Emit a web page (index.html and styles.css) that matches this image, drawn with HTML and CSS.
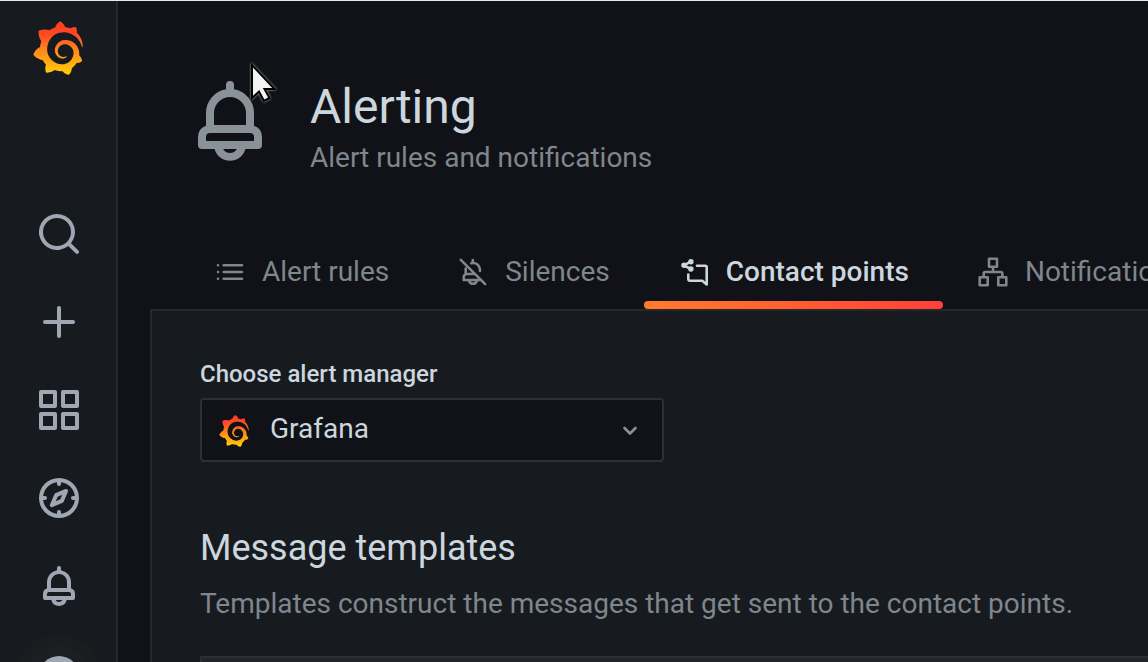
FILE: index.html
```html
<!DOCTYPE html>
<html lang="en">
<head>
    <meta charset="UTF-8">
    <meta name="viewport" content="width=device-width, initial-scale=1.0">
    <title>Alerting - Grafana</title>
    <link rel="stylesheet" href="styles.css">
</head>
<body>
    <svg class="defs" aria-hidden="true">
        <defs>
            <linearGradient id="logoGradient" x1="0" y1="1" x2="0" y2="0">
                <stop offset="0" stop-color="#ffd00c"/>
                <stop offset="0.15" stop-color="#ffb80e"/>
                <stop offset="0.45" stop-color="#ff8a1a"/>
                <stop offset="0.75" stop-color="#ff4a23"/>
                <stop offset="1" stop-color="#ff3a26"/>
            </linearGradient>
        </defs>
        <symbol id="logo" viewBox="0 0 351 365">
            <path fill="url(#logoGradient)" d="M342,161.2c-0.6-6.1-1.6-13.1-3.6-20.9c-2-7.7-5-16.2-9.4-25c-4.4-8.8-10.1-17.9-17.5-26.8c-2.9-3.5-6.1-6.9-9.5-10.2c5.1-20.3-6.2-37.9-6.2-37.9c-19.5-1.2-31.9,6.1-36.5,9.4c-0.8-0.3-1.5-0.7-2.3-1c-3.3-1.3-6.7-2.6-10.3-3.7c-3.5-1.1-7.1-2.1-10.8-3c-3.7-0.9-7.4-1.6-11.2-2.2c-0.7-0.1-1.3-0.2-2-0.3c-8.5-27.2-32.9-38.6-32.9-38.6c-27.3,17.3-32.4,41.5-32.4,41.5s-0.1,0.5-0.3,1.4c-1.5,0.4-3,0.9-4.5,1.3c-2.1,0.6-4.2,1.4-6.2,2.2c-2.1,0.8-4.1,1.6-6.2,2.5c-4.1,1.8-8.2,3.8-12.2,6c-3.9,2.2-7.7,4.6-11.4,7.1c-0.5-0.2-1-0.4-1-0.4c-37.8-14.4-71.3,2.9-71.3,2.9c-3.1,40.2,15.1,65.5,18.7,70.1c-0.9,2.5-1.7,5-2.5,7.5c-2.8,9.1-4.9,18.4-6.2,28.1c-0.2,1.4-0.4,2.8-0.5,4.2C18.8,192.7,8.5,228,8.5,228c29.1,33.5,63.1,35.6,63.1,35.6c0,0,0.1-0.1,0.1-0.1c4.3,7.7,9.3,15,14.9,21.9c2.4,2.9,4.8,5.6,7.4,8.3c-10.6,30.4,1.5,55.6,1.5,55.6c32.4,1.2,53.7-14.2,58.2-17.7c3.2,1.1,6.5,2.1,9.8,2.9c10,2.6,20.2,4.1,30.4,4.5c2.5,0.1,5.1,0.2,7.6,0.1l1.2,0l0.8,0l1.6,0l1.6-0.1l0,0.1c15.3,21.8,42.1,24.9,42.1,24.9c19.1-20.1,20.2-40.1,20.2-44.4l0,0c0,0,0-0.1,0-0.3c0-0.4,0-0.6,0-0.6l0,0c0-0.3,0-0.6,0-0.9c4-2.8,7.8-5.8,11.4-9.1c7.6-6.9,14.3-14.8,19.9-23.3c0.5-0.8,1-1.6,1.5-2.4c21.6,1.2,36.9-13.4,36.9-13.4c-3.6-22.5-16.4-33.5-19.1-35.6l0,0c0,0-0.1-0.1-0.3-0.2c-0.2-0.1-0.2-0.2-0.2-0.2c0,0,0,0,0,0c-0.1-0.1-0.3-0.2-0.5-0.3c0.1-1.4,0.2-2.7,0.3-4.1c0.2-2.4,0.2-4.9,0.2-7.3l0-1.8l0-0.9l0-0.5c0-0.6,0-0.4,0-0.6l-0.1-1.5l-0.1-2c0-0.7-0.1-1.3-0.2-1.9c-0.1-0.6-0.1-1.3-0.2-1.9l-0.2-1.9l-0.3-1.9c-0.4-2.5-0.8-4.9-1.4-7.4c-2.3-9.7-6.1-18.9-11-27.2c-5-8.3-11.2-15.6-18.3-21.8c-7-6.2-14.9-11.2-23.1-14.9c-8.3-3.7-16.9-6.1-25.5-7.2c-4.3-0.6-8.6-0.8-12.9-0.7l-1.6,0l-0.4,0c-0.1,0-0.6,0-0.5,0l-0.7,0l-1.6,0.1c-0.6,0-1.2,0.1-1.7,0.1c-2.2,0.2-4.4,0.5-6.5,0.9c-8.6,1.6-16.7,4.7-23.8,9c-7.1,4.3-13.3,9.6-18.3,15.6c-5,6-8.9,12.7-11.6,19.6c-2.7,6.9-4.2,14.1-4.6,21c-0.1,1.7-0.1,3.5-0.1,5.2c0,0.4,0,0.9,0,1.3l0.1,1.4c0.1,0.8,0.1,1.7,0.2,2.5c0.3,3.5,1,6.9,1.9,10.1c1.9,6.5,4.9,12.4,8.6,17.4c3.7,5,8.2,9.1,12.9,12.4c4.7,3.2,9.8,5.5,14.8,7c5,1.5,10,2.1,14.7,2.1c0.6,0,1.2,0,1.7,0c0.3,0,0.6,0,0.9,0c0.3,0,0.6,0,0.9-0.1c0.5,0,1-0.1,1.5-0.1c0.1,0,0.3,0,0.4-0.1l0.5-0.1c0.3,0,0.6-0.1,0.9-0.1c0.6-0.1,1.1-0.2,1.7-0.3c0.6-0.1,1.1-0.2,1.6-0.4c1.1-0.2,2.1-0.6,3.1-0.9c2-0.7,4-1.5,5.7-2.4c1.8-0.9,3.4-2,5-3c0.4-0.3,0.9-0.6,1.3-1c1.6-1.3,1.9-3.7,0.6-5.3c-1.1-1.4-3.1-1.8-4.7-0.9c-0.4,0.2-0.8,0.4-1.2,0.6c-1.4,0.7-2.8,1.3-4.3,1.8c-1.5,0.5-3.1,0.9-4.7,1.2c-0.8,0.1-1.6,0.2-2.5,0.3c-0.4,0-0.8,0.1-1.3,0.1c-0.4,0-0.9,0-1.2,0c-0.4,0-0.8,0-1.2,0c-0.5,0-1,0-1.5-0.1c0,0-0.3,0-0.1,0l-0.2,0l-0.3,0c-0.2,0-0.5,0-0.7-0.1c-0.5-0.1-0.9-0.1-1.4-0.2c-3.7-0.5-7.4-1.6-10.9-3.2c-3.6-1.6-7-3.8-10.1-6.6c-3.1-2.8-5.8-6.1-7.9-9.9c-2.1-3.8-3.6-8-4.3-12.4c-0.3-2.2-0.5-4.5-0.4-6.7c0-0.6,0.1-1.2,0.1-1.8c0,0.2,0-0.1,0-0.1l0-0.2l0-0.5c0-0.3,0.1-0.6,0.1-0.9c0.1-1.2,0.3-2.4,0.5-3.6c1.7-9.6,6.5-19,13.9-26.1c1.9-1.8,3.9-3.4,6-4.9c2.1-1.5,4.4-2.8,6.8-3.9c2.4-1.1,4.8-2,7.4-2.7c2.5-0.7,5.1-1.1,7.8-1.4c1.3-0.1,2.6-0.2,4-0.2c0.4,0,0.6,0,0.9,0l1.1,0l0.7,0c0.3,0,0,0,0.1,0l0.3,0l1.1,0.1c2.9,0.2,5.7,0.6,8.5,1.3c5.6,1.2,11.1,3.3,16.2,6.1c10.2,5.7,18.9,14.5,24.2,25.1c2.7,5.3,4.6,11,5.5,16.9c0.2,1.5,0.4,3,0.5,4.5l0.1,1.1l0.1,1.1c0,0.4,0,0.8,0,1.1c0,0.4,0,0.8,0,1.1l0,1l0,1.1c0,0.7-0.1,1.9-0.1,2.6c-0.1,1.6-0.3,3.3-0.5,4.9c-0.2,1.6-0.5,3.2-0.8,4.8c-0.3,1.6-0.7,3.2-1.1,4.7c-0.8,3.1-1.8,6.2-3,9.3c-2.4,6-5.6,11.8-9.4,17.1c-7.7,10.6-18.2,19.2-30.2,24.7c-6,2.7-12.3,4.7-18.8,5.7c-3.2,0.6-6.5,0.9-9.8,1l-0.6,0l-0.5,0l-1.1,0l-1.6,0l-0.8,0c0.4,0-0.1,0-0.1,0l-0.3,0c-1.8,0-3.5-0.1-5.3-0.3c-7-0.5-13.9-1.8-20.7-3.7c-6.7-1.9-13.2-4.6-19.4-7.8c-12.3-6.6-23.4-15.6-32-26.5c-4.3-5.4-8.1-11.3-11.2-17.4c-3.1-6.1-5.6-12.6-7.4-19.1c-1.8-6.6-2.9-13.3-3.4-20.1l-0.1-1.3l0-0.3l0-0.3l0-0.6l0-1.1l0-0.3l0-0.4l0-0.8l0-1.6l0-0.3c0,0,0,0.1,0-0.1l0-0.6c0-0.8,0-1.7,0-2.5c0.1-3.3,0.4-6.8,0.8-10.2c0.4-3.4,1-6.9,1.7-10.3c0.7-3.4,1.5-6.8,2.5-10.2c1.9-6.7,4.3-13.2,7.1-19.3c5.7-12.2,13.1-23.1,22-31.8c2.2-2.2,4.5-4.2,6.9-6.2c2.4-1.9,4.9-3.7,7.5-5.4c2.5-1.7,5.2-3.2,7.9-4.6c1.3-0.7,2.7-1.4,4.1-2c0.7-0.3,1.4-0.6,2.1-0.9c0.7-0.3,1.4-0.6,2.1-0.9c2.8-1.2,5.7-2.2,8.7-3.1c0.7-0.2,1.5-0.4,2.2-0.7c0.7-0.2,1.5-0.4,2.2-0.6c1.5-0.4,3-0.8,4.5-1.1c0.7-0.2,1.5-0.3,2.3-0.5c0.8-0.2,1.5-0.3,2.3-0.5c0.8-0.1,1.5-0.3,2.3-0.4l1.1-0.2l1.2-0.2c0.8-0.1,1.5-0.2,2.3-0.3c0.9-0.1,1.7-0.2,2.6-0.3c0.7-0.1,1.9-0.2,2.6-0.3c0.5-0.1,1.1-0.1,1.6-0.2l1.1-0.1l0.5-0.1l0.6,0c0.9-0.1,1.7-0.1,2.6-0.2l1.3-0.1c0,0,0.5,0,0.1,0l0.3,0l0.6,0c0.7,0,1.5-0.1,2.2-0.1c2.9-0.1,5.9-0.1,8.8,0c5.8,0.2,11.5,0.9,17,1.9c11.1,2.1,21.5,5.6,31,10.3c9.5,4.6,17.9,10.3,25.3,16.5c0.5,0.4,0.9,0.8,1.4,1.2c0.4,0.4,0.9,0.8,1.3,1.2c0.9,0.8,1.7,1.6,2.6,2.4c0.9,0.8,1.7,1.6,2.5,2.4c0.8,0.8,1.6,1.6,2.4,2.5c3.1,3.3,6,6.6,8.6,10c5.2,6.7,9.4,13.5,12.7,19.9c0.2,0.4,0.4,0.8,0.6,1.2c0.2,0.4,0.4,0.8,0.6,1.2c0.4,0.8,0.8,1.6,1.1,2.4c0.4,0.8,0.7,1.5,1.1,2.3c0.3,0.8,0.7,1.5,1,2.3c1.2,3,2.4,5.9,3.3,8.6c1.5,4.4,2.6,8.3,3.5,11.7c0.3,1.4,1.6,2.3,3,2.1c1.5-0.1,2.6-1.3,2.6-2.8C342.6,170.4,342.5,166.1,342,161.2z"/>
        </symbol>
        <symbol id="bell" viewBox="0 0 24 24">
            <path d="M18,13.18V10a6,6,0,0,0-5-5.91V3a1,1,0,0,0-2,0V4.09A6,6,0,0,0,6,10v3.18A3,3,0,0,0,4,16v2a1,1,0,0,0,1,1H8.14a4,4,0,0,0,7.72,0H19a1,1,0,0,0,1-1V16A3,3,0,0,0,18,13.18ZM8,10a4,4,0,0,1,8,0v3H8Zm4,10a2,2,0,0,1-1.72-1h3.44A2,2,0,0,1,12,20Zm6-3H6V16a1,1,0,0,1,1-1H17a1,1,0,0,1,1,1Z"/>
        </symbol>
    </svg>

    <div class="app">
        <nav class="sidebar" aria-label="Main menu">
            <a class="home" href="#" aria-label="Home">
                <svg class="home-logo"><use href="#logo"/></svg>
            </a>
            <a class="side-item" href="#" aria-label="Search">
                <svg viewBox="0 0 24 24"><path d="M21.71,20.29,18,16.61A9,9,0,1,0,16.61,18l3.68,3.68a1,1,0,0,0,1.42,0A1,1,0,0,0,21.71,20.29ZM11,18a7,7,0,1,1,7-7A7,7,0,0,1,11,18Z"/></svg>
            </a>
            <a class="side-item" href="#" aria-label="Create">
                <svg viewBox="0 0 24 24"><path d="M19,11H13V5a1,1,0,0,0-2,0v6H5a1,1,0,0,0,0,2h6v6a1,1,0,0,0,2,0V13h6a1,1,0,0,0,0-2Z"/></svg>
            </a>
            <a class="side-item" href="#" aria-label="Dashboards">
                <svg viewBox="0 0 24 24"><path d="M10,13H3a1,1,0,0,0-1,1v7a1,1,0,0,0,1,1h7a1,1,0,0,0,1-1V14A1,1,0,0,0,10,13ZM9,20H4V15H9ZM21,2H14a1,1,0,0,0-1,1v7a1,1,0,0,0,1,1h7a1,1,0,0,0,1-1V3A1,1,0,0,0,21,2ZM20,9H15V4h5Zm1,4H14a1,1,0,0,0-1,1v7a1,1,0,0,0,1,1h7a1,1,0,0,0,1-1V14A1,1,0,0,0,21,13Zm-1,7H15V15h5ZM10,2H3A1,1,0,0,0,2,3v7a1,1,0,0,0,1,1h7a1,1,0,0,0,1-1V3A1,1,0,0,0,10,2ZM9,9H4V4H9Z"/></svg>
            </a>
            <a class="side-item" href="#" aria-label="Explore">
                <svg viewBox="0 0 24 24"><path d="M12,2A10,10,0,1,0,22,12,10,10,0,0,0,12,2Zm1,17.93V19a1,1,0,0,0-2,0v.93A8,8,0,0,1,4.07,13H5a1,1,0,0,0,0-2H4.07A8,8,0,0,1,11,4.07V5a1,1,0,0,0,2,0V4.07A8,8,0,0,1,19.93,11H19a1,1,0,0,0,0,2h.93A8,8,0,0,1,13,19.93ZM15.14,7.55l-5,2.12a1,1,0,0,0-.52.52l-2.12,5a1,1,0,0,0,.21,1.1,1,1,0,0,0,.7.29.93.93,0,0,0,.4-.08l5-2.12a1,1,0,0,0,.52-.52l2.12-5a1,1,0,0,0-1.31-1.31Zm-2.49,5.1-2.28,1,1-2.28,2.28-1Z"/></svg>
            </a>
            <a class="side-item" href="#" aria-label="Alerting">
                <svg><use href="#bell"/></svg>
            </a>
            <a class="side-item" href="#" aria-label="Profile">
                <svg class="avatar" viewBox="0 0 88 88">
                    <circle cx="44" cy="46" r="42" fill="#1a1c1f"/>
                    <circle cx="44" cy="46" r="31" fill="#1c1e21"/>
                    <circle cx="44" cy="46" r="20"/>
                </svg>
            </a>
        </nav>

        <main class="page">
            <header class="page-header">
                <svg class="page-icon"><use href="#bell"/></svg>
                <div>
                    <h1>Alerting</h1>
                    <p class="muted">Alert rules and notifications</p>
                </div>
            </header>

            <nav class="tabs" aria-label="Alerting sections">
                <a class="tab" href="#">
                    <svg viewBox="0 0 32 32"><path d="M4 9.3h0M4 16h0M4 22.7h0M9.7 9.3H28M9.7 16H28M9.7 22.7H28"/></svg>
                    Alert rules
                </a>
                <a class="tab" href="#">
                    <svg viewBox="0 0 32 32"><path d="M3.8 3.8L28.2 28.2M8.7 12.5V18H18M8.7 18.2Q6.7 19 6.7 21.5V24H23M12.2 25a4 4 0 0 0 7.6 0M15.8 4V6.5M14.3 7.2C19.5 6 23 9.5 23 15"/></svg>
                    Silences
                </a>
                <a class="tab tab-active" href="#" aria-current="page">
                    <svg viewBox="0 0 32 32">
                        <path d="M12.7 5.7L6 9.3L12.7 13M19 9.7H27.2Q28.7 9.7 28.7 11.2V28.5L24.3 24.7H12Q10.3 24.7 10.3 23V18.5"/>
                        <g class="dots"><circle cx="6" cy="9.3" r="2.7"/><circle cx="12.9" cy="5.7" r="2.7"/><circle cx="12.9" cy="13" r="2.7"/></g>
                    </svg>
                    Contact points
                </a>
                <a class="tab" href="#">
                    <svg viewBox="0 0 32 32"><path d="M12 2.7h8v8h-8zM2.7 21.3h8v8h-8zM21.3 21.3h8v8h-8zM16 10.7V16M6.7 21V17.5Q6.7 16 8.2 16H23.8Q25.3 16 25.3 17.5V21"/></svg>
                    Notification policies
                </a>
            </nav>

            <section class="panel">
                <label class="field-label" for="alertManager">Choose alert manager</label>
                <div class="select-wrap">
                    <select id="alertManager">
                        <option>Grafana</option>
                    </select>
                    <svg class="select-logo"><use href="#logo"/></svg>
                    <svg class="select-arrow" viewBox="0 0 16 16"><path d="M2.5 5L8 10.5L13.5 5"/></svg>
                </div>

                <h2>Message templates</h2>
                <p class="muted">Templates construct the messages that get sent to the contact points.</p>
                <div class="templates"></div>
            </section>
        </main>
    </div>

    <svg class="pointer" viewBox="0 0 32 46" aria-hidden="true">
        <path d="M3 4V37L10 30.5L15 40L20.500 37L15.500 28H25.500Z" fill="#f2f4f4" stroke="#000" stroke-width="2"/>
    </svg>
</body>
</html>
```

FILE: styles.css
```css
* {
    margin: 0;
    padding: 0;
    box-sizing: border-box;
}

body {
    height: 100vh;
    overflow: hidden;
    border-top: 1px solid #e4ece9;
    background: #111217;
    color: #ccd6de;
    font-family: Roboto, "Liberation Sans", sans-serif;
    font-size: 28px;
    line-height: 40px;
}

a {
    color: inherit;
    text-decoration: none;
}

svg {
    display: block;
    flex-shrink: 0;
    fill: currentColor;
}

.defs {
    position: absolute;
    width: 0;
    height: 0;
}

.app {
    display: flex;
    height: 100%;
    overflow: hidden;
}

/* sidebar */
.sidebar {
    display: flex;
    flex-direction: column;
    flex-shrink: 0;
    width: 118px;
    padding-top: 20px;
    background: #171b1f;
    border-right: 2px solid #25272c;
    color: #9fa7b3;
}

.home {
    display: flex;
    justify-content: center;
    margin-bottom: 115px;
}

.home-logo {
    width: 52px;
    height: 54px;
}

.side-item {
    display: flex;
    flex-shrink: 0;
    justify-content: center;
    align-items: center;
    height: 88px;
    padding-left: 2px;
}

.side-item svg {
    width: 48px;
    height: 48px;
}

.side-item .avatar {
    width: 88px;
    height: 88px;
}

/* page */
.page {
    display: flex;
    flex: 1;
    flex-direction: column;
    min-width: 0;
    padding-left: 32px;
}

.page-header {
    display: flex;
    gap: 32px;
    padding: 72px 32px 0;
}

.page-icon {
    width: 96px;
    height: 96px;
    color: #8b9199;
}

h1 {
    margin: 4px 0 1px;
    font-size: 48px;
    font-weight: 400;
    line-height: 60px;
}

.muted {
    color: #7f868d;
}

.tabs {
    display: flex;
    padding: 57px 30px 0;
}

.tab {
    display: flex;
    flex-shrink: 0;
    align-items: center;
    gap: 16px;
    height: 74px;
    padding: 0 34px;
    color: #7f868d;
    white-space: nowrap;
}

.tab svg {
    width: 32px;
    height: 32px;
    fill: none;
    stroke: currentColor;
    stroke-width: 2.6;
    stroke-linecap: round;
    stroke-linejoin: round;
}

.tab .dots {
    fill: currentColor;
    stroke: none;
}

.tab-active {
    position: relative;
    color: #ccd6de;
    font-weight: 500;
}

.tab-active::after {
    content: "";
    position: absolute;
    right: 0;
    bottom: 0;
    left: 0;
    height: 8px;
    border-radius: 4px;
    background: linear-gradient(to right, #ff7b2b, #ff4037);
}

/* panel */
.panel {
    flex: 1;
    padding: 47px 48px 0;
    background: #171b1f;
    border: 2px solid #25272c;
    border-width: 2px 0 0 2px;
}

.field-label {
    display: block;
    margin-bottom: 8px;
    font-size: 24px;
    font-weight: 500;
    line-height: 32px;
}

.select-wrap {
    position: relative;
    width: 464px;
    max-width: 100%;
    margin-bottom: 62px;
}

select {
    display: block;
    width: 100%;
    height: 64px;
    padding: 0 64px 2px 68px;
    appearance: none;
    background: #111217;
    border: 2px solid #2d2f34;
    border-radius: 4px;
    color: inherit;
    font: inherit;
}

.select-logo {
    position: absolute;
    top: 17px;
    left: 18px;
    width: 32px;
    height: 32px;
}

.select-arrow {
    position: absolute;
    top: 25px;
    right: 26px;
    width: 16px;
    height: 16px;
    fill: none;
    stroke: #8b9199;
    stroke-width: 2.6;
    stroke-linecap: round;
    stroke-linejoin: round;
}

h2 {
    margin-bottom: 12px;
    font-size: 36px;
    font-weight: 400;
    line-height: 48px;
}

.templates {
    height: 120px;
    margin-top: 32px;
    margin-right: -48px;
    background: #22252b;
    border: 2px solid #2d2f34;
    border-right: 0;
}

.pointer {
    position: absolute;
    top: 61px;
    left: 249px;
    width: 32px;
    height: 46px;
    filter: drop-shadow(0 0 1px #b8bcc0);
}
```
